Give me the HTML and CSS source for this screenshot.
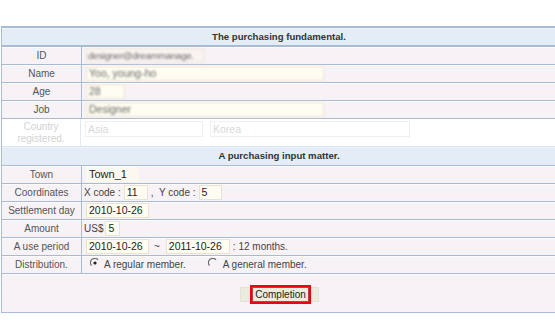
FILE: index.html
```html
<!DOCTYPE html>
<html>
<head>
<meta charset="utf-8">
<link rel="stylesheet" href="styles.css">
</head>
<body>
<div class="form">
  <div class="head h1">The purchasing fundamental.</div>
  <div class="row"><div class="lbl">ID</div><div class="val"><span class="fld ro w118 blur small">designer@dreammanage.</span></div></div>
  <div class="row"><div class="lbl">Name</div><div class="val"><span class="fld w238 blur">Yoo, young-ho</span></div></div>
  <div class="row"><div class="lbl">Age</div><div class="val"><span class="fld w39 blur">28</span></div></div>
  <div class="row"><div class="lbl">Job</div><div class="val"><span class="fld w238 blur">Designer</span></div></div>
  <div class="row faded"><div class="lbl">Country<br>registered.</div><div class="val top"><span class="fld w118">Asia</span><span class="fld w200">Korea</span></div></div>
  <div class="head h2">A purchasing input matter.</div>
  <div class="row"><div class="lbl">Town</div><div class="val"><span class="fld plain w53">Town_1</span></div></div>
  <div class="row"><div class="lbl">Coordinates</div><div class="val tight"><span class="txt">X code :</span><span class="fld w24">11</span><span class="txt">, &nbsp;Y code :</span><span class="fld w23">5</span></div></div>
  <div class="row"><div class="lbl">Settlement day</div><div class="val"><span class="fld w63">2010-10-26</span></div></div>
  <div class="row"><div class="lbl">Amount</div><div class="val tight"><span class="txt">US$</span><span class="fld w15">5</span></div></div>
  <div class="row"><div class="lbl">A use period</div><div class="val"><span class="fld w63">2010-10-26</span><span class="txt tilde">~</span><span class="fld w64">2011-10-26</span><span class="txt">: 12 months.</span></div></div>
  <div class="row"><div class="lbl">Distribution.</div><div class="val radios">
    <span class="radio"><svg width="10" height="10" viewBox="0 0 10 10"><path d="M1.5 7.5 A4 4 0 0 1 8 1.8" fill="none" stroke="#6d6d6d" stroke-width="1.2"/><circle cx="5" cy="5" r="1.6" fill="#222"/></svg></span><span class="txt">A regular member.</span>
    <span class="radio r2"><svg width="10" height="10" viewBox="0 0 10 10"><path d="M1.5 7.5 A4 4 0 0 1 8 1.8" fill="none" stroke="#6d6d6d" stroke-width="1.2"/></svg></span><span class="txt">A general member.</span>
  </div></div>
  <div class="foot"><span class="btn"><span class="focus">Completion</span></span></div>
</div>
</body>
</html>
```
FILE: styles.css
```css
html, body { margin: 0; padding: 0; background: #fff; overflow: hidden; }
body { font-family: "Liberation Sans", Arial, sans-serif; width: 555px; height: 330px; }
.form {
  margin: 26px 0 0 1px;
  width: 556px;
  border-top: 2px solid #a9bbd2;
  border-left: 1px solid #a9bbd2;
  border-right: 1px solid #a9bbd2;
  border-bottom: 1px solid #a9bbd2;
  box-sizing: border-box;
}
.head {
  background: #e4ecf5;
  color: #333;
  font-weight: bold;
  font-size: 9.6px;
  text-align: center;
  box-shadow: inset 0 1px 0 #eef3f9;
}
.h1 { height: 17px; line-height: 17px; border-bottom: 2px solid #a9bbd2; }
.h2 { height: 18px; line-height: 18px; border-bottom: 1px solid #a9bbd2; }
.row {
  display: flex;
  height: 17px;
  background: #f7f2f6;
  border-bottom: 1px solid #a9bbd2;
  box-shadow: inset 0 1px 0 #fdfcfd;
}
.lbl {
  width: 79px;
  flex: none;
  border-right: 1px solid #a9bbd2;
  color: #555;
  font-size: 10px;
  text-align: center;
  line-height: 17px;
}
.val {
  flex: 1;
  display: flex;
  align-items: center;
  padding-left: 4px;
  font-size: 10px;
  color: #444;
}
.val.tight { padding-left: 2px; }
.fld {
  display: inline-block;
  box-sizing: border-box;
  height: 15px;
  line-height: 13px;
  border: 1px solid #ebe2d3;
  background: #fffdf1;
  padding-left: 2px;
  font-size: 10.5px;
  color: #222;
  white-space: nowrap;
}
.fld.ro { background: #f9f4f2; }
.fld.plain { border-color: #faf8ef; background: #fbf9ef; font-size: 11px; }
.blur { color: #666; filter: blur(1px); }
.blur.small { font-size: 9.5px; letter-spacing: -0.2px; padding-left: 1px; }
.w118 { width: 118px; }
.w238 { width: 238px; }
.w39 { width: 39px; }
.w200 { width: 200px; margin-left: 7px; }
.w53 { width: 53px; }
.w24 { width: 24px; margin: 0 3px; }
.w23 { width: 23px; margin-left: 3px; }
.w63 { width: 63px; }
.w64 { width: 64px; }
.w15 { width: 15px; margin-left: 2px; }
.txt { white-space: nowrap; font-size: 10px; color: #444; }
.tilde { margin: 0 6px 0 5px; }
.w64 + .txt { margin-left: 3px; }
.radios { padding-left: 8px; }
.radio { display: inline-flex; width: 10px; height: 10px; margin-right: 4px; margin-top: -4px; }
.radio.r2 { margin-left: 22px; margin-right: 5px; }
.faded { height: 27px; background: #fff; box-shadow: none; border-bottom-color: #d9e2ed; }
.faded .lbl { color: #d2d2d2; line-height: 12px; padding-top: 2px; box-sizing: border-box; border-right-color: #e3e9f1; }
.faded .val.top { align-items: flex-start; padding-top: 2px; }
.faded .fld { background: #fff; border-color: #f2eeee; color: #d8d8d8; height: 16px; line-height: 14px; }
.foot {
  height: 38px;
  background: #f7f2f6;
  box-shadow: inset 0 1px 0 #fdfcfd;
  display: flex;
  justify-content: center;
  align-items: flex-start;
  padding-top: 13px;
  box-sizing: border-box;
}
.btn {
  display: inline-flex;
  justify-content: center;
  align-items: center;
  width: 79px;
  height: 15px;
  background: #ecebdf;
  border: 1px solid #e4e2d4;
  box-sizing: border-box;
  margin-left: 1px;
}
.focus {
  flex: none;
  display: inline-flex;
  justify-content: center;
  align-items: center;
  width: 61px;
  height: 19px;
  box-sizing: border-box;
  border: 2px solid #f00010;
  box-shadow: inset 0 0 0 1px #b84040;
  background: #ecebdc;
  font-size: 10px;
  color: #222;
  margin-left: 2px;
}
```
